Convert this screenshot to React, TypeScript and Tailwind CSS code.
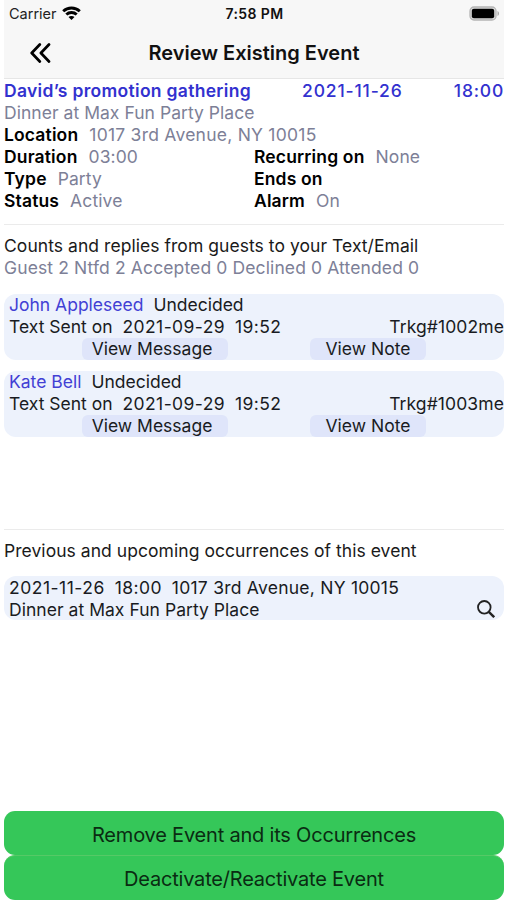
import type { ReactNode } from "react";

type Guest = { name: string; tracking: string };

const guests: Guest[] = [
  { name: "John Appleseed", tracking: "Trkg#1002me" },
  { name: "Kate Bell", tracking: "Trkg#1003me" },
];

function Field({ label, children }: { label: string; children?: ReactNode }) {
  return (
    <div className="flex gap-[11px]">
      <span className="font-semibold tracking-[0.15px] text-black">{label}</span>
      <span className="tracking-[0.1px] text-[#7d8097]">{children}</span>
    </div>
  );
}

function StatusBar() {
  return (
    <div className="flex h-[27px] items-center justify-between pt-px pr-[4px] pl-[5px] text-[14px] leading-[26px]">
      <div className="flex w-[160px] items-center gap-[5px] text-[#222]">
        <span className="text-[14.5px]">Carrier</span>
        <svg className="-mt-[2px]" width="19" height="14" viewBox="0 0 19 14" fill="none" stroke="#000" strokeWidth="2.9">
          <path d="M1.2 5.2C5.8.9 13.2.9 17.8 5.2" />
          <path d="M4.3 8.5c2.9-2.7 7.5-2.7 10.4 0" />
          <path d="M9.5 13.9 6.5 11c1.6-1.500 4.400-1.500 6 0z" fill="#000" stroke="none" />
        </svg>
      </div>
      <span className="text-[14px] font-semibold tracking-[0.4px] text-[#111]">7:58 PM</span>
      <div className="flex w-[160px] justify-end">
        <svg className="-mt-[2px]" width="31" height="15" viewBox="0 0 31 15">
          <rect x="1" y="1" width="26" height="13" rx="4" fill="#ddd" stroke="#b5b5b5" strokeWidth="1.3" />
          <rect x="2.800" y="2.800" width="22.400" height="9.400" rx="2" fill="#000" />
          <path d="M28.500 5c2 .7 2 4.300 0 5z" fill="#aaa" />
        </svg>
      </div>
    </div>
  );
}

function GuestCard({ name, tracking }: Guest) {
  return (
    <div className="h-[66px] rounded-[12px] bg-[#edf2fc] pl-[5px] text-[#191b22]">
      <div className="flex gap-[10px]">
        <span className="text-[#4240d4]">{name}</span>
        <span>Undecided</span>
      </div>
      <div className="flex">
        <span>Text Sent on</span>
        <span className="ml-[10px] tracking-[0.4px]">2021-09-29</span>
        <span className="ml-[10px] tracking-[0.4px]">19:52</span>
        <span className="ml-auto tracking-[0.1px]">{tracking}</span>
      </div>
      <div className="flex">
        <button className="ml-[73px] h-[22px] w-[146px] rounded-[6px] bg-[#dfe5fa] pr-[6px]">View Message</button>
        <button className="ml-[82px] h-[22px] w-[116px] rounded-[6px] bg-[#dfe5fa]">View Note</button>
      </div>
    </div>
  );
}

export default function App() {
  return (
    <div className="flex h-[900px] w-[507px] flex-col overflow-hidden bg-white pr-[3px] pl-[4px] font-[Inter,sans-serif] text-[17.5px] leading-[22px] whitespace-nowrap text-[#1a1a1a]">
      <header className="h-[79px] shrink-0 border-b border-[#e6e6e6] bg-[#f7f7f7]">
        <StatusBar />
        <div className="flex h-[51px] items-center">
          <svg className="ml-[26px] shrink-0" width="21" height="20" viewBox="0 0 21 20" fill="none" stroke="#000" strokeWidth="2.7" strokeLinecap="round" strokeLinejoin="round">
            <path d="M9.800 1.500 1.700 10l8.100 8.500M19 1.500 10.900 10l8.100 8.500" />
          </svg>
          <h1 className="mr-[47px] flex-1 text-center text-[20px] font-semibold text-[#111]">Review Existing Event</h1>
        </div>
      </header>

      <section className="h-[146px] shrink-0 border-b border-[#ebebeb] pt-px">
        <div className="flex font-semibold text-[#3231cf]">
          <span className="w-[298px] tracking-[0.3px]">David’s promotion gathering</span>
          <span className="font-medium tracking-[0.85px]">2021-11-26</span>
          <span className="ml-auto font-medium tracking-[0.8px]">18:00</span>
        </div>
        <div className="tracking-[0.04px] text-[#7d8097]">Dinner at Max Fun Party Place</div>
        <Field label="Location">
          <span className="tracking-[0.24px]">1017 3rd Avenue, NY 10015</span>
        </Field>
        <div className="grid grid-cols-2">
          <Field label="Duration">03:00</Field>
          <Field label="Recurring on">None</Field>
          <Field label="Type">Party</Field>
          <Field label="Ends on" />
          <Field label="Status">Active</Field>
          <Field label="Alarm">On</Field>
        </div>
      </section>

      <section className="h-[305px] shrink-0 border-b border-[#ebebeb] pt-[10px]">
        <div className="tracking-[0.05px]">Counts and replies from guests to your Text/Email</div>
        <div className="tracking-[0.12px] text-[#7d8097]">Guest 2 Ntfd 2 Accepted 0 Declined 0 Attended 0</div>
        <div className="mt-[15px] flex flex-col gap-[11px]">
          {guests.map((g) => (
            <GuestCard key={g.name} {...g} />
          ))}
        </div>
      </section>

      <section className="pt-[10px]">
        <div className="tracking-[0.05px]">Previous and upcoming occurrences of this event</div>
        <div className="mt-[14px] flex h-[44px] items-end justify-between rounded-[12px] bg-[#edf2fc] pr-[9px] pl-[5px] text-[#191b22]">
          <div className="-mb-px">
            <div className="flex gap-[10px]">
              <span className="tracking-[0.5px]">2021-11-26</span>
              <span className="tracking-[0.4px]">18:00</span>
              <span className="tracking-[0.24px]">1017 3rd Avenue, NY 10015</span>
            </div>
            <div className="tracking-[0.04px]">Dinner at Max Fun Party Place</div>
          </div>
          <svg className="mb-[2px]" width="18" height="18" viewBox="0 0 18 18" fill="none" stroke="#222" strokeWidth="1.800">
            <circle cx="7.300" cy="7.300" r="6.300" />
            <path d="m11.800 11.800 5.400 5.400" strokeWidth="2.400" />
          </svg>
        </div>
      </section>

      <footer className="mt-auto flex flex-col text-[20px] tracking-[-0.2px] text-[#0a2b12]">
        <button className="h-[44px] rounded-[11px] bg-[#35c759] pt-[3px]">Remove Event and its Occurrences</button>
        <button className="h-[45px] rounded-[11px] border-t border-[#56c966] bg-[#35c759] pt-[2px]">Deactivate/Reactivate Event</button>
      </footer>
    </div>
  );
}
